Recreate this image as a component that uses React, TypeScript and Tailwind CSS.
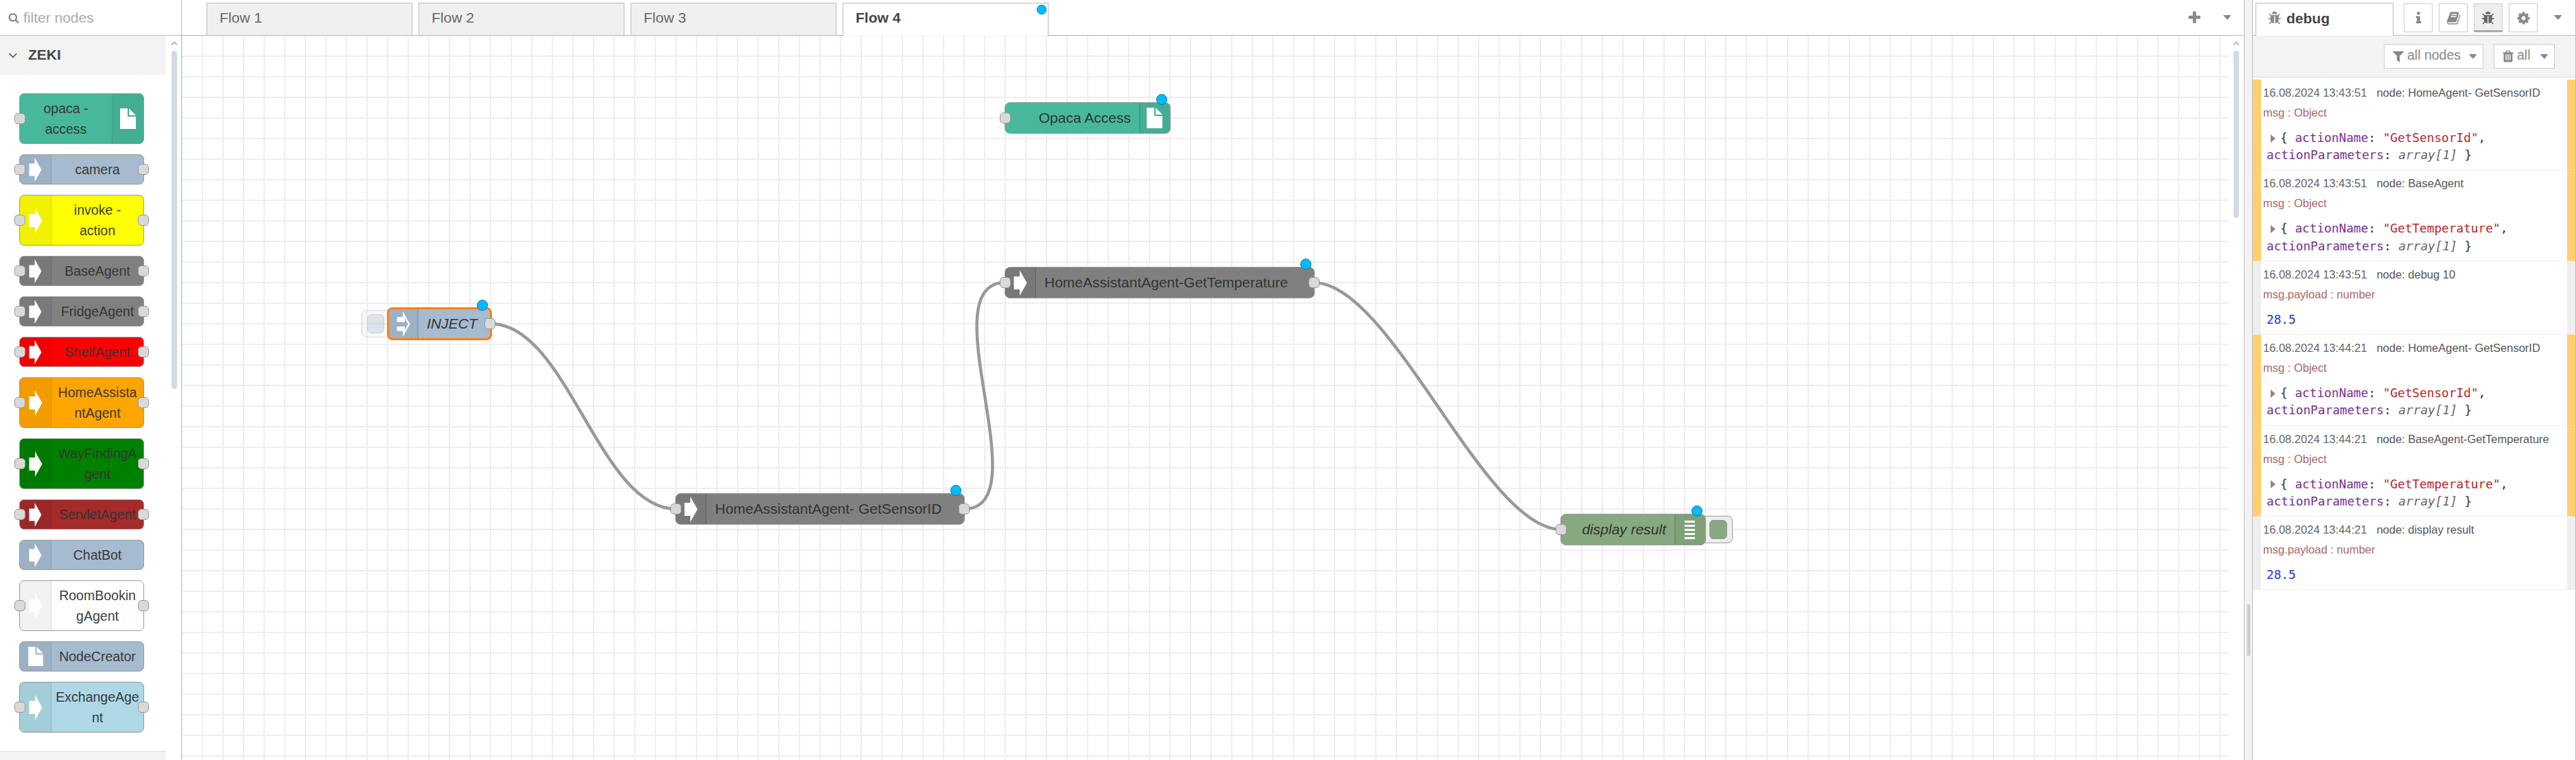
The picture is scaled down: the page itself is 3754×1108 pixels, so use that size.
import React from "react";

const GLYPHS = {
  bug: "M1632 960q0 26-19 45t-45 19h-224q0 171-67 290l208 209q19 19 19 45t-19 45q-18 19-45 19t-45-19l-198-197q-5 5-15 13t-42 28.5-65 36.5-82 29-97 13v-896h-128v896q-51 0-101.5-13.5t-87-33-66-39-43.5-32.5l-15-14-183 207q-20 21-48 21-24 0-43-16-19-18-20.5-44.5t15.5-46.5l202-227q-58-114-58-274h-224q-26 0-45-19t-19-45 19-45 45-19h224v-294l-173-173q-19-19-19-45t19-45 45-19 45 19l173 173h844l173-173q19-19 45-19t45 19 19 45-19 45l-173 173v294h224q26 0 45 19t19 45zm-480-576h-640q0-133 93.5-226.5t226.5-93.5 226.5 93.5 93.5 226.5z",
  book: "M1703 478q40 57 18 129l-275 906q-19 64-76.5 107.5t-122.5 43.5h-923q-77 0-148.5-53.5t-99.5-131.5q-24-67-2-127 0-4 3-27t4-37q1-8-3-21.5t-3-19.5q2-11 8-21t16.5-23.5 16.5-23.5q23-38 45-91.5t30-91.5q3-10 .5-30t-.5-28q3-11 17-28t17-23q21-36 42-92t25-90q1-9-2.5-32t.5-28q4-13 22-30.5t22-22.5q19-26 42.5-84.5t27.5-96.5q1-8-3-25.5t-2-26.5q2-8 9-18t18-23 17-21q8-12 16.5-30.5t15-35 16-36 19.5-32 26.5-23.5 36-11.5 47.5 5.5l-1 3q38-9 51-9h761q74 0 114 56t18 130l-274 906q-36 119-71.5 153.5t-128.5 34.5h-869q-27 0-38 15-11 16-1 43 24 70 144 70h923q29 0 56-15.5t35-41.5l300-987q7-22 5-57 38 15 59 43zm-1064 2q-4 13 2 22.5t20 9.5h608q13 0 25.5-9.5t16.5-22.5l21-64q4-13-2-22.5t-20-9.5h-608q-13 0-25.5 9.5t-16.5 22.5zm-83 256q-4 13 2 22.5t20 9.5h608q13 0 25.5-9.5t16.5-22.5l21-64q4-13-2-22.5t-20-9.5h-608q-13 0-25.5 9.5t-16.5 22.5z",
  cog: "M1152 896q0-106-75-181t-181-75-181 75-75 181 75 181 181 75 181-75 75-181zm512-109v222q0 12-8 23t-20 13l-185 28q-19 54-39 91 35 50 107 138 10 12 10 25t-9 23q-27 37-99 108t-94 71q-12 0-26-9l-138-108q-44 23-91 38-16 136-29 186-7 28-36 28h-222q-14 0-24.5-8.5t-11.5-21.5l-28-184q-49-16-90-37l-141 107q-10 9-25 9-14 0-25-11-126-114-165-168-7-10-7-23 0-12 8-23 15-21 51-66.5t54-70.5q-27-50-41-99l-183-27q-13-2-21-12.5t-8-23.5v-222q0-12 8-23t19-13l186-28q14-46 39-92-40-57-107-138-10-12-10-24 0-10 9-23 26-36 98.5-107.5t94.5-71.5q13 0 26 10l138 107q44-23 91-38 16-136 29-186 7-28 36-28h222q14 0 24.5 8.5t11.5 21.5l28 184q49 16 90 37l142-107q9-9 24-9 13 0 25 10 129 119 165 170 7 8 7 22 0 12-8 23-15 21-51 66.5t-54 70.5q26 50 41 98l183 28q13 2 21 12.5t8 23.5z",
  info: "M1216 1344v128q0 26-19 45t-45 19h-512q-26 0-45-19t-19-45v-128q0-26 19-45t45-19h64v-384h-64q-26 0-45-19t-19-45v-128q0-26 19-45t45-19h384q26 0 45 19t19 45v576h64q26 0 45 19t19 45zm-128-1152v192q0 26-19 45t-45 19h-256q-26 0-45-19t-19-45v-192q0-26 19-45t45-19h256q26 0 45 19t19 45z",
  filter: "M1595 295q17 41-14 70l-493 493v742q0 42-39 59-13 5-25 5-27 0-45-19l-256-256q-19-19-19-45v-486l-493-493q-31-29-14-70 17-39 59-39h1280q42 0 59 39z",
  trash: "M704 1376v-704q0-14-9-23t-23-9h-64q-14 0-23 9t-9 23v704q0 14 9 23t23 9h64q14 0 23-9t9-23zm256 0v-704q0-14-9-23t-23-9h-64q-14 0-23 9t-9 23v704q0 14 9 23t23 9h64q14 0 23-9t9-23zm256 0v-704q0-14-9-23t-23-9h-64q-14 0-23 9t-9 23v704q0 14 9 23t23 9h64q14 0 23-9t9-23zm-544-992h448l-48-117q-7-9-17-11h-317q-10 2-17 11zm928 32v64q0 14-9 23t-23 9h-96v948q0 83-47 143.5t-113 60.5h-832q-66 0-113-58.5t-47-141.5v-952h-96q-14 0-23-9t-9-23v-64q0-14 9-23t23-9h309l70-167q15-37 54-63t79-26h320q40 0 79 26t54 63l70 167h309q14 0 23 9t9 23z",
  search: "M1216 832q0-185-131.5-316.5t-316.5-131.5-316.5 131.5-131.5 316.5 131.5 316.5 316.5 131.5 316.5-131.5 131.5-316.5zm512 832q0 52-38 90t-90 38q-54 0-90-38l-343-342q-179 124-399 124-143 0-273.5-55.5t-225-150-150-225-55.5-273.5 55.5-273.5 150-225 225-150 273.5-55.5 273.5 55.5 225 150 150 225 55.5 273.5q0 220-124 399l343 343q37 37 37 90z",
  plus: "M1600 736v192q0 40-28 68t-68 28h-416v416q0 40-28 68t-68 28h-192q-40 0-68-28t-28-68v-416h-416q-40 0-68-28t-28-68v-192q0-40 28-68t68-28h416v-416q0-40 28-68t68-28h192q40 0 68 28t28 68v416h416q40 0 68 28t28 68z",
};

function Glyph({ name, className }: { name: keyof typeof GLYPHS; className: string }) {
  return (
    <svg viewBox="0 0 1792 1792" className={`shrink-0 fill-current ${className}`}>
      <path d={GLYPHS[name]} />
    </svg>
  );
}

function Caret({ className = "" }: { className?: string }) {
  return (
    <svg viewBox="0 0 12 7" className={`h-[7px] w-3 shrink-0 fill-[#888] ${className}`}>
      <path d="M.5 0h11L6.6 6.2q-.6.6-1.2 0L0 .6z" />
    </svg>
  );
}

type IconKind = "arrow" | "inject" | "file" | "list";

function NodeIcon({ kind, tall = false }: { kind: IconKind; tall?: boolean }) {
  if (kind === "arrow")
    return (
      <svg viewBox="0 0 20 37" className={tall ? "h-[37px] w-5 fill-white" : "h-[35px] w-[19px] fill-white"}>
        <path d="M0.5 9H9V0L19.5 18.500L9 37V28H.5z" />
      </svg>
    );
  if (kind === "inject")
    return (
      <svg viewBox="0 0 20 37" className="h-[37px] w-5">
        <path className="fill-white" d="M0.500 8H9V0L19.500 18.500L9 37V28.500H.5z" />
        <path className="fill-[#9dafc5]" d="M0 15.500H12V10L16.800 18.500L12 27.500V22H0z" />
      </svg>
    );
  if (kind === "file")
    return (
      <svg viewBox="0 0 23 30" className={tall ? "h-[30px] w-[23px] fill-white" : "h-[28px] w-[22px] fill-white"}>
        <path d="M0 0H11V12H23V30H0zM13 0L23 10H13z" />
      </svg>
    );
  return (
    <div className="flex flex-col gap-[3px]">
      {[0, 1, 2, 3, 4].map((i) => (
        <div key={i} className="h-[3px] w-[15px] bg-white" />
      ))}
    </div>
  );
}

function Port({ side }: { side: "left" | "right" }) {
  return (
    <div
      className={`absolute top-1/2 h-[16px] w-[16px] -translate-y-1/2 rounded-[5px] border border-[#999] bg-[#d9d9d9] ${
        side === "left" ? "-left-[8px]" : "-right-[8px]"
      }`}
    />
  );
}

interface PaletteItem {
  lines: string[];
  color: string;
  icon: IconKind;
  left?: boolean;
  right?: boolean;
  iconRight?: boolean;
}

const PALETTE: PaletteItem[] = [
  { lines: ["opaca -", "access"], color: "bg-[#47b89c]", icon: "file", left: true, iconRight: true },
  { lines: ["camera"], color: "bg-[#a6bbcf]", icon: "arrow", left: true, right: true },
  { lines: ["invoke -", "action"], color: "bg-[#ffff00]", icon: "arrow", left: true, right: true },
  { lines: ["BaseAgent"], color: "bg-[#808080]", icon: "arrow", left: true, right: true },
  { lines: ["FridgeAgent"], color: "bg-[#808080]", icon: "arrow", left: true, right: true },
  { lines: ["ShelfAgent"], color: "bg-[#ff0000]", icon: "arrow", left: true, right: true },
  { lines: ["HomeAssista", "ntAgent"], color: "bg-[#ffa500]", icon: "arrow", left: true, right: true },
  { lines: ["WayFindingA", "gent"], color: "bg-[#008000]", icon: "arrow", left: true, right: true },
  { lines: ["ServletAgent"], color: "bg-[#a52a2a]", icon: "arrow", left: true, right: true },
  { lines: ["ChatBot"], color: "bg-[#a6bbcf]", icon: "arrow" },
  { lines: ["RoomBookin", "gAgent"], color: "bg-[#ffffff]", icon: "arrow", left: true, right: true },
  { lines: ["NodeCreator"], color: "bg-[#a6bbcf]", icon: "file" },
  { lines: ["ExchangeAge", "nt"], color: "bg-[#add8e6]", icon: "arrow", left: true, right: true },
];

function PaletteNode({ item }: { item: PaletteItem }) {
  const tall = item.lines.length > 1;
  return (
    <div
      className={`relative flex w-[182px] shrink-0 rounded-[7px] border border-[#999] ${item.color} ${
        tall ? "h-[74px]" : "h-[44px]"
      } ${item.iconRight ? "flex-row-reverse" : ""}`}
    >
      <div
        className={`flex w-[46px] shrink-0 items-center justify-center border-black/10 bg-black/5 ${
          item.iconRight ? "rounded-r-[6px] border-l" : "rounded-l-[6px] border-r"
        }`}
      >
        <NodeIcon kind={item.icon} tall={tall} />
      </div>
      <div className="flex flex-1 flex-col items-center justify-center text-[19.5px] leading-[30px] whitespace-nowrap text-[#333] opacity-95">
        {item.lines.map((l) => (
          <div key={l} className="flex w-0 justify-center">
            {l}
          </div>
        ))}
      </div>
      {item.left && <Port side="left" />}
      {item.right && <Port side="right" />}
    </div>
  );
}

function ScrollArrow() {
  return (
    <svg viewBox="0 0 8 7" className="h-[7px] w-2 fill-none stroke-[#bbb] stroke-2">
      <path d="M.8 6V4.500L4 1.300L7.200 4.500V6" />
    </svg>
  );
}

function Palette() {
  return (
    <aside className="flex w-[265px] shrink-0 flex-col border-r border-[#bbb]">
      <div className="flex h-[52px] shrink-0 items-center border-b border-[#bbb] pl-3 text-[21px] text-[#aaa]">
        <Glyph name="search" className="mt-px h-4 w-4 text-[#888]" />
        <span className="ml-1.5">filter nodes</span>
      </div>
      <div className="flex min-h-0 flex-1 overflow-hidden">
        <div className="w-[242px] shrink-0">
          <div className="flex h-[57px] items-center bg-[#f3f3f3] pl-[13px]">
            <svg viewBox="0 0 12 8" className="h-2 w-3 fill-none stroke-[#555] stroke-[1.6]">
              <path d="M.8 1L6 6.500L11.200 1" />
            </svg>
            <span className="ml-4 pb-0.5 text-[21px] font-bold text-[#444]">ZEKI</span>
          </div>
          <div className="flex flex-col gap-[15px] py-[27px] pl-7">
            {PALETTE.map((item) => (
              <PaletteNode key={item.lines.join("")} item={item} />
            ))}
          </div>
          <div className="h-[57px] border-t border-[#ddd] bg-[#f3f3f3]" />
        </div>
        <div className="flex w-[22px] flex-col items-center pt-2 pl-px">
          <ScrollArrow />
          <div className="mt-[7px] h-[493px] w-2 rounded bg-[#d0dbe4]" />
        </div>
      </div>
    </aside>
  );
}

function Dot({ className }: { className: string }) {
  return <div className={`absolute h-4 w-4 rounded-full border border-[#0f72a5] bg-[#00bcff] ${className}`} />;
}

interface FlowNodeProps {
  label: string;
  place: string;
  color: string;
  icon: IconKind;
  iconRight?: boolean;
  left?: boolean;
  right?: boolean;
  italic?: boolean;
  selected?: boolean;
}

function FlowNode({ label, place, color, icon, iconRight, left, right, italic, selected }: FlowNodeProps) {
  return (
    <div
      className={`absolute flex rounded-[8px] ${place} ${color} ${iconRight ? "flex-row-reverse" : ""} ${
        selected ? "border-[3px] border-[#ff7f0e]" : "border border-[#999]"
      }`}
    >
      <div
        className={`flex shrink-0 items-center justify-center border-black/10 bg-black/5 ${selected ? "w-[43px]" : "w-[45px]"} ${
          iconRight ? "rounded-r-[6px] border-l-2 pr-0.5" : "rounded-l-[6px] border-r-2"
        }`}
      >
        <NodeIcon kind={icon} tall />
      </div>
      <div
        className={`flex flex-1 items-center text-[21px] whitespace-nowrap text-[#333] ${
          iconRight ? "justify-end pr-3" : "pl-3"
        } ${italic ? "italic" : ""}`}
      >
        {label}
      </div>
      {left && <Port side="left" />}
      {right && <Port side="right" />}
      <Dot className={selected ? "-top-[14px] right-[3px]" : "-top-[13px] right-[4px]"} />
    </div>
  );
}

const WIRES = [
  "M450 420C562.5 420 607.5 690 720 690",
  "M1140 690C1252.5 690 1087.5 360 1200 360",
  "M1650 360C1762.5 360 1897.5 720 2010 720",
];

function Canvas() {
  return (
    <div className="relative h-full w-[2983px] shrink-0 overflow-hidden bg-[linear-gradient(to_right,#eee_2px,transparent_2px),linear-gradient(to_bottom,#eee_2px,transparent_2px)] bg-[size:30px_30px] bg-[position:-1px_-1px]">
      <svg viewBox="0 0 2983 1056" className="absolute top-0 left-0 h-[1056px] w-[2983px] fill-none stroke-[#999] stroke-[4.5]">
        {WIRES.map((d) => (
          <path key={d} d={d} />
        ))}
      </svg>

      <div className="absolute top-[400px] left-[262px] flex h-10 w-[48px] items-center rounded-[7px] border border-[#999] bg-[#eee] pl-[7px] opacity-40">
        <div className="h-7 w-[25px] rounded-[6px] border border-[#999] bg-[#a6bbcf]" />
      </div>
      <FlowNode label="INJECT" place="left-[299px] top-[396px] h-12 w-[153px]" color="bg-[#a6bbcf]" icon="inject" right italic selected />
      <FlowNode label="HomeAssistantAgent- GetSensorID" place="left-[719px] top-[667px] h-[46px] w-[422px]" color="bg-[#808080]" icon="arrow" left right />
      <FlowNode label="Opaca Access" place="left-[1199px] top-[97px] h-[46px] w-[242px]" color="bg-[#47b89c]" icon="file" iconRight left />
      <FlowNode label="HomeAssistantAgent-GetTemperature" place="left-[1199px] top-[337px] h-[46px] w-[452px]" color="bg-[#808080]" icon="arrow" left right />
      <div className="absolute top-[700px] left-[2212px] flex h-10 w-[48px] items-center justify-end rounded-[7px] border border-[#999] bg-[#eee] pr-[7px]">
        <div className="h-7 w-[26px] rounded-[6px] border border-[#999] bg-[#87a980]" />
      </div>
      <FlowNode label="display result" place="left-[2009px] top-[697px] h-[46px] w-[212px]" color="bg-[#87a980]" icon="list" iconRight left italic />
    </div>
  );
}

function Workspace() {
  return (
    <main className="flex min-w-0 flex-1 flex-col">
      <div className="flex h-[52px] shrink-0 border-b border-[#bbb]">
        <div className="flex gap-[9px] pt-1 pl-9 text-[21px] text-[#666]">
          {["Flow 1", "Flow 2", "Flow 3"].map((t) => (
            <div key={t} className="flex h-[47px] w-[300px] items-center border border-b-0 border-[#bbb] bg-[#f0f0f0] pb-1 pl-[18px]">
              {t}
            </div>
          ))}
          <div className="relative flex h-12 w-[300px] items-center border border-b-0 border-[#bbb] bg-white pb-1.5 pl-[18px] font-bold text-[#444]">
            Flow 4
            <Dot className="top-[1px] right-[1px] scale-90" />
          </div>
        </div>
        <div className="ml-auto flex items-center pr-[18px]">
          <Glyph name="plus" className="h-[22px] w-[22px] text-[#888]" />
          <Caret className="ml-[31px]" />
        </div>
      </div>
      <div className="flex min-h-0 flex-1 bg-white">
        <Canvas />
        <div className="flex flex-1 flex-col items-center pt-2">
          <ScrollArrow />
          <div className="mt-[7px] h-[244px] w-2 rounded bg-[#d0dbe4]" />
        </div>
      </div>
    </main>
  );
}

type Message =
  | { time: string; node: string; kind: "object"; value: string }
  | { time: string; node: string; kind: "number" };

const MESSAGES: Message[] = [
  { time: "13:43:51", node: "HomeAgent- GetSensorID", kind: "object", value: "GetSensorId" },
  { time: "13:43:51", node: "BaseAgent", kind: "object", value: "GetTemperature" },
  { time: "13:43:51", node: "debug 10", kind: "number" },
  { time: "13:44:21", node: "HomeAgent- GetSensorID", kind: "object", value: "GetSensorId" },
  { time: "13:44:21", node: "BaseAgent-GetTemperature", kind: "object", value: "GetTemperature" },
  { time: "13:44:21", node: "display result", kind: "number" },
];

function MessageRow({ m }: { m: Message }) {
  const isObject = m.kind === "object";
  return (
    <div
      className={`shrink-0 border-x-[12px] border-b border-b-[#eee] pl-[3px] whitespace-nowrap ${
        isObject ? "h-[132.4px] border-x-[#ffcf70]" : "h-[107.4px] border-x-[#eee]"
      }`}
    >
      <div className="pt-1 text-[16.5px] leading-[30px] text-[#666]">
        16.08.2024 {m.time}
        <span className="ml-[14px] text-[#555]">node: {m.node}</span>
      </div>
      <div className="text-[16.5px] leading-[29px] text-[#aa6767]">{isObject ? "msg : Object" : "msg.payload : number"}</div>
      <div className="pt-[10px] pl-[5px] font-['DejaVu_Sans_Mono',monospace] text-[17.75px] leading-[25.300px] text-[#333]">
        {m.kind === "object" ? (
          <>
            <div className="flex items-center whitespace-pre">
              <svg viewBox="0 0 7 12" className="mr-[7px] ml-[6px] h-3 w-[7px] fill-[#888]">
                <path d="M0 0L7 6L0 12z" />
              </svg>
              <span>{"{ "}</span>
              <span className="text-[#792e90]">actionName</span>
              <span>: </span>
              <span className="text-[#b72828]">"{m.value}"</span>
              <span>,</span>
            </div>
            <div className="whitespace-pre">
              <span className="text-[#792e90]">actionParameters</span>
              {": "}
              <span className="text-[#666] italic">array[1]</span>
              {" }"}
            </div>
          </>
        ) : (
          <div className="text-[#2033d6]">28.5</div>
        )}
      </div>
    </div>
  );
}

function Sidebar() {
  return (
    <aside className="flex w-[472px] shrink-0 flex-col border-x border-[#bbb] bg-white">
      <div className="flex h-[52px] shrink-0 border-b border-[#bbb] pl-1">
        <div className="mt-1 flex h-12 w-[201px] items-center border border-b-0 border-[#bbb] bg-white pb-1 pl-[17px] text-[21px] font-bold text-[#444]">
          <Glyph name="bug" className="h-[21px] w-[21px] text-[#888]" />
          <span className="ml-[6px]">debug</span>
        </div>
        <div className="mt-[5px] ml-[15px] flex gap-[9px] text-[#888]">
          <div className="flex h-[42px] w-[42px] items-center justify-center border border-[#ccc] bg-white">
            <Glyph name="info" className="h-[21px] w-[21px]" />
          </div>
          <div className="flex h-[42px] w-[42px] items-center justify-center border border-[#ccc] bg-white">
            <Glyph name="book" className="h-[21px] w-[21px]" />
          </div>
          <div className="flex h-[42px] w-[42px] items-center justify-center border border-b-[3px] border-[#ccc] border-b-[#aaa] bg-[#eee] text-[#666]">
            <Glyph name="bug" className="mt-0.5 h-[21px] w-[21px]" />
          </div>
          <div className="flex h-[42px] w-[42px] items-center justify-center border border-[#ccc] bg-white">
            <Glyph name="cog" className="h-[21px] w-[21px]" />
          </div>
        </div>
        <Caret className="mt-[22px] ml-6" />
      </div>
      <div className="flex h-[61px] shrink-0 justify-end gap-[15px] border-b border-[#ddd] bg-[#f3f3f3] pt-3 pr-[30px] text-[19.5px] text-[#888]">
        <div className="flex h-9 w-[145px] items-center border border-[#ccc] bg-white pl-[10px]">
          <Glyph name="filter" className="h-5 w-5" />
          <span className="ml-[3px] pb-0.5">all nodes</span>
          <Caret className="mr-2 ml-auto" />
        </div>
        <div className="flex h-9 w-[89px] items-center border border-[#ccc] bg-white pl-[10px]">
          <Glyph name="trash" className="h-5 w-5" />
          <span className="ml-[3px] pb-0.5">all</span>
          <Caret className="mr-2 ml-auto" />
        </div>
      </div>
      <div className="flex flex-col pt-[3px]">
        {MESSAGES.map((m, i) => (
          <MessageRow key={i} m={m} />
        ))}
      </div>
    </aside>
  );
}

export default function App() {
  return (
    <div className="flex h-screen w-full overflow-hidden bg-white font-['Liberation_Sans',Arial,sans-serif]">
      <Palette />
      <Workspace />
      <div className="flex w-3 shrink-0 justify-center border-l border-[#bbb] bg-[#f3f3f3] pt-[881px]">
        <div className="ml-px h-[75px] w-1.5 border-x border-[#e3e3e3] bg-[#ccc]" />
      </div>
      <Sidebar />
    </div>
  );
}
